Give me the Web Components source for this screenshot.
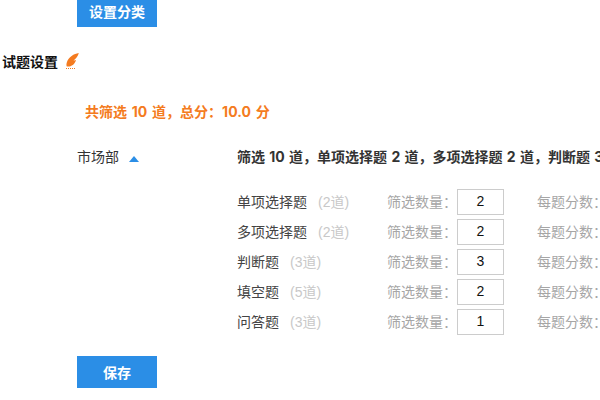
<!DOCTYPE html>
<html>
<head>
<meta charset="utf-8">
<style>
  html, body { margin: 0; height: 400px; overflow: hidden; background: #fff; }
</style>
</head>
<body>
<exam-settings></exam-settings>
<script>
const FONT = `"Liberation Sans", "Noto Sans CJK SC", sans-serif`;
const BOLD_FONT = `Inter, "Noto Sans CJK SC", sans-serif`;

class BlueButton extends HTMLElement {
  constructor() {
    super();
    this.attachShadow({ mode: "open" });
    this.shadowRoot.innerHTML = `
    <style>
      :host {
        display: flex;
        width: 80px;
        height: 32px;
        align-items: center;
        justify-content: center;
        background: #2b8ee6;
        color: #fff;
        font: bold 14px ${FONT};
      }
    </style>
    <slot></slot>`;
  }
}

class QuestionRow extends HTMLElement {
  constructor() {
    super();
    this.attachShadow({ mode: "open" });
  }

  connectedCallback() {
    const name = this.getAttribute("name");
    const total = this.getAttribute("total");
    const value = this.getAttribute("value");
    this.shadowRoot.innerHTML = `
    <style>
      :host {
        display: flex;
        height: 30px;
        align-items: center;
        font: 14px ${FONT};
        white-space: nowrap;
      }
      .name { width: 150px; color: #444; padding-bottom: 3px; }
      .name span { color: #c8c8c8; margin-left: 11px; }
      .label { width: 70px; flex: none; color: #a6a6a6; padding-bottom: 3px; }
      .box {
        box-sizing: border-box;
        flex: none;
        width: 47px;
        height: 26px;
        padding-bottom: 2px;
        margin-right: 33px;
        border: 1px solid #ccc;
        display: flex;
        align-items: center;
        justify-content: center;
        color: #111;
        font-size: 14px;
      }
    </style>
    <div class="name">${name}<span>(${total}道)</span></div>
    <div class="label">筛选数量&#xFF1A;</div>
    <div class="box">${value}</div>
    <div class="label">每题分数&#xFF1A;</div>`;
  }
}

class ExamSettings extends HTMLElement {
  constructor() {
    super();
    this.attachShadow({ mode: "open" });
    this.shadowRoot.innerHTML = `
    <style>
      :host {
        display: flex;
        flex-direction: column;
        width: 600px;
        height: 400px;
        overflow: hidden;
        font: 14px ${FONT};
      }
      .top { height: 27px; padding-left: 77px; display: flex; align-items: flex-end; }
      .title {
        margin-top: 24px;
        padding-left: 2px;
        height: 20px;
        display: flex;
        align-items: center;
        gap: 7px;
        font-weight: bold;
        color: #111;
      }
      .title svg { margin-top: 1px; }
      .summary {
        margin-top: 31px;
        padding-left: 85px;
        height: 20px;
        color: #f47b20;
        font: bold 14px/20px ${BOLD_FONT};
        word-spacing: 1.5px;
      }
      .dept { display: flex; margin-top: 25px; padding-left: 77px; }
      .dept-name { flex: none; width: 160px; display: flex; align-items: center; gap: 10px; height: 20px; color: #333; }
      .dept-name b { font-weight: normal; padding-bottom: 2px; }
      .tri { width: 0; height: 0; border: 5px solid transparent; border-top: 0; border-bottom: 6px solid #2b8ee6; margin-top: 3px; }
      .detail { flex: none; width: 400px; }
      .headline { height: 20px; font: bold 14px/20px ${BOLD_FONT}; word-spacing: 1px; color: #333; white-space: nowrap; margin-bottom: 20px; }
      .save { margin: 19px 0 0 77px; }
    </style>
    <div class="top"><blue-button>设置分类</blue-button></div>
    <div class="title">试题设置
      <svg width="14" height="17" viewBox="0 0 14 17">
        <path d="M13.800 0C9 .8 3.500 3.800 1.800 9.500c-.5 1.700-.5 3 0 4 4 .6 8-1.800 9.200-6.500-.9.4-1.700.5-2.500.4C11 5.600 13 3 13.800 0z" fill="#f47b20"/>
        <path d="M1 15.500h10" stroke="#f47b20" stroke-width="1" stroke-dasharray="1 1" fill="none"/>
      </svg>
    </div>
    <div class="summary">共筛选 10 道&#xFF0C;总分&#xFF1A;10.0 分</div>
    <div class="dept">
      <div class="dept-name"><b>市场部</b><span class="tri"></span></div>
      <div class="detail">
        <div class="headline">筛选 10 道&#xFF0C;单项选择题 2 道&#xFF0C;多项选择题 2 道&#xFF0C;判断题 3 道</div>
        <question-row name="单项选择题" total="2" value="2"></question-row>
        <question-row name="多项选择题" total="2" value="2"></question-row>
        <question-row name="判断题" total="3" value="3"></question-row>
        <question-row name="填空题" total="5" value="2"></question-row>
        <question-row name="问答题" total="3" value="1"></question-row>
      </div>
    </div>
    <blue-button class="save">保存</blue-button>`;
  }
}

customElements.define("blue-button", BlueButton);
customElements.define("question-row", QuestionRow);
customElements.define("exam-settings", ExamSettings);
</script>
</body>
</html>
